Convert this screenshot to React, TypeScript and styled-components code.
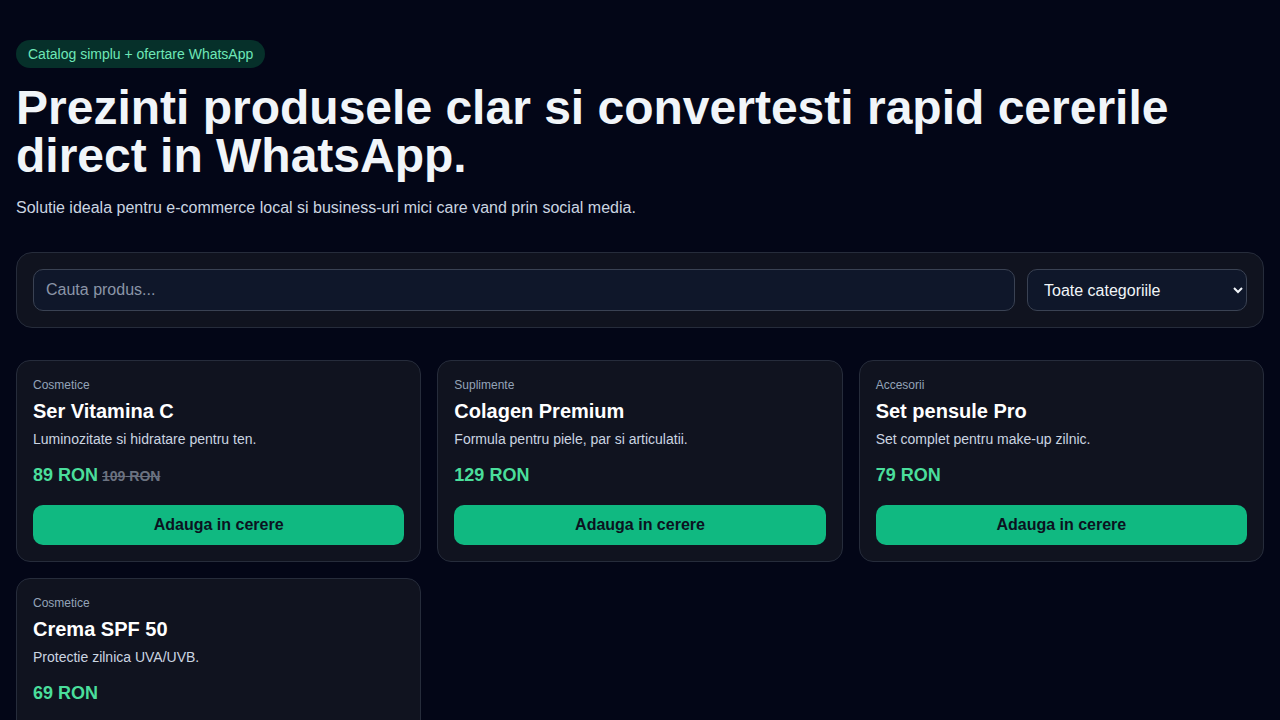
import React from "react";
import styled, { createGlobalStyle } from "styled-components";

interface IProduct {
  category: string;
  name: string;
  description: string;
  price: number;
  oldPrice?: number;
}

const products: IProduct[] = [
  {
    category: "Cosmetice",
    name: "Ser Vitamina C",
    description: "Luminozitate si hidratare pentru ten.",
    price: 89,
    oldPrice: 109,
  },
  {
    category: "Suplimente",
    name: "Colagen Premium",
    description: "Formula pentru piele, par si articulatii.",
    price: 129,
  },
  {
    category: "Accesorii",
    name: "Set pensule Pro",
    description: "Set complet pentru make-up zilnic.",
    price: 79,
  },
  {
    category: "Cosmetice",
    name: "Crema SPF 50",
    description: "Protectie zilnica UVA/UVB.",
    price: 69,
  },
];

const GlobalStyle = createGlobalStyle`
  * {
    box-sizing: border-box;
  }
  body {
    margin: 0;
    background-color: #030617;
    color: #f1f5f9;
    font-family: "Liberation Sans", Arial, sans-serif;
  }
`;

const Page = styled.main`
  padding: 40px 16px;
`;

const Hero = styled.header`
  display: flex;
  flex-direction: column;
  align-items: flex-start;
`;

const Badge = styled.span`
  display: inline-block;
  padding: 6px 12px;
  border-radius: 999px;
  background-color: #06302a;
  color: #6ee7b7;
  font-size: 14px;
  line-height: 16px;
`;

const Title = styled.h1`
  margin: 16px 0 0;
  font-size: 48px;
  line-height: 48px;
  font-weight: 700;
  color: #f1f5f9;
`;

const Subtitle = styled.p`
  margin: 17px 0 0;
  font-size: 16px;
  line-height: 22px;
  color: #cbd5e1;
`;

const Filters = styled.section`
  display: flex;
  gap: 12px;
  margin-top: 33px;
  padding: 16px;
  border: 1px solid #262c3b;
  border-radius: 16px;
  background-color: #10131f;
`;

const SearchInput = styled.input`
  flex: 1;
  height: 42px;
  padding: 0 12px;
  border: 1px solid #3a4253;
  border-radius: 10px;
  background-color: #0f172a;
  color: #f1f5f9;
  font-family: "Liberation Sans", Arial, sans-serif;
  font-size: 16px;
  outline: none;

  &::placeholder {
    color: #8b95a7;
  }
`;

const CategorySelect = styled.select`
  width: 220px;
  height: 42px;
  padding: 0 12px;
  border: 1px solid #3a4253;
  border-radius: 10px;
  background-color: #0f172a;
  color: #f1f5f9;
  color-scheme: dark;
  font-family: "Liberation Sans", Arial, sans-serif;
  font-size: 16px;
`;

const Grid = styled.section`
  display: grid;
  grid-template-columns: repeat(3, 1fr);
  gap: 16px;
  margin-top: 32px;
`;

const Card = styled.article`
  display: flex;
  flex-direction: column;
  padding: 16px;
  border: 1px solid #262c3b;
  border-radius: 14px;
  background-color: #10131f;
`;

const Category = styled.span`
  font-size: 12px;
  line-height: 16px;
  color: #94a3b8;
`;

const Name = styled.h3`
  margin: 6px 0 0;
  font-size: 20px;
  line-height: 24px;
  font-weight: 700;
  color: #ffffff;
`;

const Description = styled.p`
  margin: 6px 0 0;
  font-size: 14px;
  line-height: 20px;
  color: #cbd5e1;
`;

const PriceRow = styled.div`
  display: flex;
  align-items: baseline;
  gap: 4px;
  height: 24px;
  margin-top: 14px;
  line-height: 24px;
`;

const Price = styled.span`
  font-size: 18px;
  font-weight: 700;
  color: #4ade9b;
`;

const OldPrice = styled.span`
  font-size: 14px;
  font-weight: 700;
  color: #6b7280;
  text-decoration: line-through;
`;

const AddButton = styled.button`
  margin-top: 18px;
  height: 40px;
  border: none;
  border-radius: 10px;
  background-color: #10b981;
  color: #0b1220;
  font-family: "Liberation Sans", Arial, sans-serif;
  font-size: 16px;
  font-weight: 700;
  cursor: pointer;
`;

function ProductCard({ product }: { product: IProduct }) {
  return (
    <Card>
      <Category>{product.category}</Category>
      <Name>{product.name}</Name>
      <Description>{product.description}</Description>
      <PriceRow>
        <Price>{product.price} RON</Price>
        {product.oldPrice && <OldPrice>{product.oldPrice} RON</OldPrice>}
      </PriceRow>
      <AddButton>Adauga in cerere</AddButton>
    </Card>
  );
}

export default function App() {
  return (
    <>
      <GlobalStyle />
      <Page>
        <Hero>
          <Badge>Catalog simplu + ofertare WhatsApp</Badge>
          <Title>
            Prezinti produsele clar si convertesti rapid cererile direct in
            WhatsApp.
          </Title>
          <Subtitle>
            Solutie ideala pentru e-commerce local si business-uri mici care
            vand prin social media.
          </Subtitle>
        </Hero>
        <Filters>
          <SearchInput placeholder="Cauta produs..." />
          <CategorySelect defaultValue="all">
            <option value="all">Toate categoriile</option>
            <option value="Cosmetice">Cosmetice</option>
            <option value="Suplimente">Suplimente</option>
            <option value="Accesorii">Accesorii</option>
          </CategorySelect>
        </Filters>
        <Grid>
          {products.map((p) => (
            <ProductCard key={p.name} product={p} />
          ))}
        </Grid>
      </Page>
    </>
  );
}
